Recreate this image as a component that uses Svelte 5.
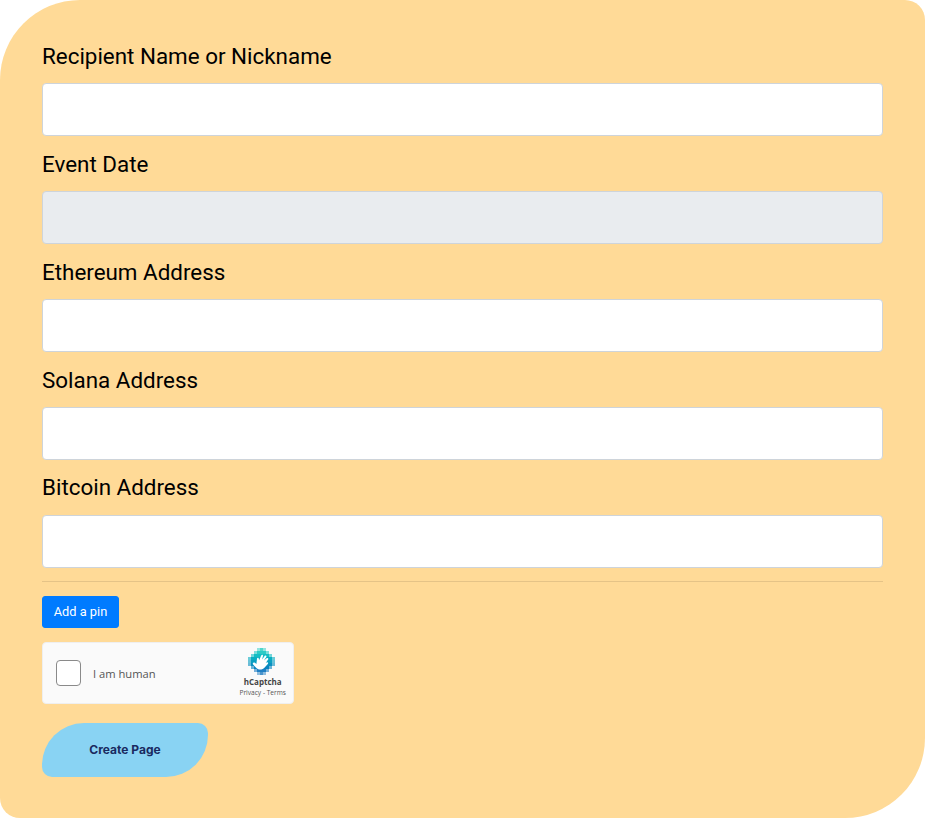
<script>
    const fields = [
        { label: "Recipient Name or Nickname" },
        { label: "Event Date", disabled: true },
        { label: "Ethereum Address" },
        { label: "Solana Address" },
        { label: "Bitcoin Address" },
    ];

    // hcaptcha logo is a rough grid of squares, row widths give the rounded cross shape
    const rowColors = ["#4fd6cc", "#2ccbc6", "#14bec4", "#0aaec2", "#0a9fc2", "#0a90c0", "#0a84c0", "#1f7fc4", "#4a94cc"];
    const rows = [
        [3, 5],
        [2, 6],
        [1, 7],
        [0, 8],
        [0, 8],
        [0, 8],
        [1, 7],
        [2, 6],
        [3, 5],
    ];
    const cells = [];
    rows.forEach(([from, to], y) => {
        for (let x = from; x <= to; x++) {
            const edge = x === from || x === to;
            cells.push({ x, y, fill: rowColors[y], opacity: edge ? 0.6 : 1 });
        }
    });
</script>

<div class="card">
    <form on:submit|preventDefault>
        {#each fields as field}
            <div class="form-group">
                <label for={field.label}>{field.label}</label>
                <input id={field.label} type="text" disabled={field.disabled} />
            </div>
        {/each}

        <hr />

        <button type="button" class="btn-pin">Add a pin</button>

        <div class="captcha">
            <div class="captcha-check"></div>
            <span class="captcha-text">I am human</span>
            <div class="captcha-brand">
                <svg width="27" height="27" viewBox="0 0 9 9" shape-rendering="crispEdges">
                    {#each cells as c}
                        <rect x={c.x} y={c.y} width="1" height="1" fill={c.fill} opacity={c.opacity} />
                    {/each}
                    <path
                        shape-rendering="auto"
                        fill="#fff"
                        d="M1.8 4.9 C2.1 4.7 2.5 5 2.8 5.3 L3 3.5 C3.1 3.1 3.6 3.1 3.6 3.6 L3.7 4.1 L4.4 2.5 C4.6 2.1 5.1 2.3 5 2.7 L4.7 3.8 L5.6 2.6 C5.9 2.3 6.3 2.6 6.1 3 L5.3 4.2 L6.2 3.4 C6.6 3.1 6.9 3.5 6.7 3.8 L5.9 5 L6.2 4.8 C6.6 4.6 6.9 5 6.6 5.3 L5.7 6.3 C4.8 7.4 3.5 7.5 2.7 6.6 L1.7 5.5 C1.5 5.2 1.6 5 1.8 4.9 Z"
                    />
                </svg>
                <span class="brand-name">hCaptcha</span>
                <span class="brand-links">Privacy - Terms</span>
            </div>
        </div>

        <button type="submit" class="btn-create">Create Page</button>
    </form>
</div>

<style>
    :global(body) {
        margin: 0;
        background: #fff;
    }

    .card {
        box-sizing: border-box;
        width: 925px;
        height: 818px;
        padding: 40.05px 42px 0;
        background-color: #ffda97;
        border-radius: 80px 20px 80px 20px;
        font-family: Roboto, "Liberation Sans", sans-serif;
    }

    .form-group {
        margin-bottom: 11.75px;
    }

    label {
        display: block;
        margin-bottom: 10.1px;
        font-size: 22.4px;
        line-height: 33px;
        color: #000;
    }

    input {
        display: block;
        box-sizing: border-box;
        width: 100%;
        height: 53px;
        padding: 6px 12px;
        background: #fff;
        border: 1px solid #ced4da;
        border-radius: 4px;
        font-size: 16px;
    }

    input:disabled {
        background: #e9ecef;
    }

    hr {
        margin: 13.5px 0 14px;
        border: 0;
        border-top: 1px solid rgba(0, 0, 0, 0.1);
    }

    .btn-pin {
        display: block;
        width: 77px;
        height: 32px;
        padding: 0 0 2px;
        background: #007bff;
        border: 1px solid #007bff;
        border-radius: 3px;
        color: #fff;
        font-family: Roboto, sans-serif;
        font-size: 12.8px;
    }

    .captcha {
        display: flex;
        align-items: center;
        box-sizing: border-box;
        width: 252px;
        height: 62px;
        margin-top: 14px;
        padding: 0 7px 0 13px;
        background: #fafafa;
        border: 1px solid #efefef;
        border-radius: 4px;
        font-family: "Open Sans", sans-serif;
    }

    .captcha-check {
        box-sizing: border-box;
        width: 25px;
        height: 26px;
        background: #fff;
        border: 1px solid #8a8a8a;
        border-radius: 4px;
    }

    .captcha-text {
        margin-left: 12px;
        font-size: 11.2px;
        color: #555;
    }

    .captcha-brand {
        display: flex;
        flex-direction: column;
        align-items: center;
        margin-left: auto;
    }

    .captcha-brand svg {
        margin-right: 3px;
    }

    .brand-name {
        margin-top: 1px;
        font-size: 8px;
        font-weight: 700;
        line-height: 11px;
        color: #444;
    }

    .brand-links {
        font-size: 6.6px;
        line-height: 11px;
        color: #555;
    }

    .btn-create {
        display: flex;
        align-items: center;
        justify-content: center;
        width: 166px;
        height: 54px;
        margin-top: 19px;
        padding: 0 0 2px;
        background: #89d3f3;
        border: 0;
        border-radius: 42px 10px 42px 10px;
        color: #1a2a60;
        font-family: Inter, sans-serif;
        font-size: 12px;
        font-weight: 700;
    }
</style>
